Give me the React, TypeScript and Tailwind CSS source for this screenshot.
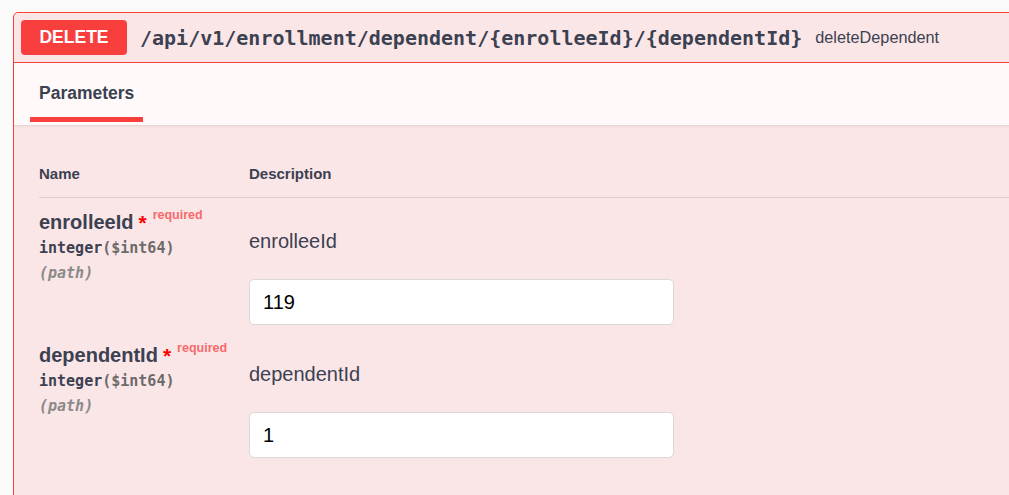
import React from "react";

interface Param {
  name: string;
  type: string;
  format: string;
  location: string;
  value: string;
}

const params: Param[] = [
  { name: "enrolleeId", type: "integer", format: "($int64)", location: "(path)", value: "119" },
  { name: "dependentId", type: "integer", format: "($int64)", location: "(path)", value: "1" },
];

const sans = "font-['Liberation_Sans',Arial,sans-serif]";
const mono = "font-['DejaVu_Sans_Mono',monospace]";

function ParamRow({ p }: { p: Param }) {
  return (
    <div className="flex pt-[12px] pb-[6px]">
      <div className="w-[210px] shrink-0">
        <div className="flex items-start h-[24px]">
          <span className={`${sans} text-[20px] leading-[24px] font-bold text-[#3b4151]`}>{p.name}</span>
          <span className={`${sans} ml-[5px] mt-[1px] text-[21px] leading-[24px] font-bold text-[#ff0000]`}>*</span>
          <span className={`${sans} ml-[6px] -mt-[3px] text-[12.5px] leading-[16px] font-bold text-[#f56a6c]`}>
            required
          </span>
        </div>
        <div className={`${mono} pt-[5px] text-[15px] leading-[18px] font-bold text-[#3b4151]`}>
          {p.type}
          <span className="text-[#6b6b6b]">{p.format}</span>
        </div>
        <div className={`${mono} pt-[7px] text-[15px] leading-[18px] italic font-bold text-[#8a8a8a]`}>
          {p.location}
        </div>
      </div>
      <div className="pt-[19px]">
        <p className={`${sans} text-[20px] leading-[24px] text-[#3b4151]`}>{p.name}</p>
        <div className="mt-[26px] w-[425px] h-[46px] bg-white border border-[#d9d9d9] rounded-[5px] flex items-center pl-[13px]">
          <span className={`${sans} text-[20px] text-black`}>{p.value}</span>
        </div>
      </div>
    </div>
  );
}

export default function App() {
  return (
    <div className="h-[495px] overflow-hidden bg-[#fafafa] pt-[12px] pl-[13px]">
      <div className="mr-[-20px] h-[600px] border border-[#f93e3e] rounded-tl-[5px] bg-[#fbe6e7]">
        {/* summary */}
        <div className="flex items-center h-[50px] border-b border-[#f93e3e] pl-[7px]">
          <div
            className={`${sans} w-[106px] h-[35px] rounded-[4px] bg-[#f93e3e] text-white text-[17.5px] font-bold flex items-center justify-center pb-[1px]`}
          >
            DELETE
          </div>
          <span className={`${mono} ml-[13px] text-[20px] font-bold text-[#3b4151]`}>
            /api/v1/enrollment/dependent/{"{enrolleeId}"}/{"{dependentId}"}
          </span>
          <span className={`${sans} ml-[13px] text-[16.25px] text-[#3b4151]`}>deleteDependent</span>
        </div>

        {/* tabs */}
        <div className="h-[62px] bg-[#fff9f9] shadow-[0_1px_2px_rgba(0,0,0,0.1)] flex items-end pl-[16px]">
          <div className="relative px-[9px] h-full flex items-center">
            <span className={`${sans} text-[17.5px] font-bold text-[#3b4151] -mt-[1px]`}>Parameters</span>
            <div className="absolute left-0 right-0 bottom-[3px] h-[5px] bg-[#f93e3e]" />
          </div>
        </div>

        {/* table */}
        <div className="pl-[25px] pt-[40px]">
          <div className="flex border-b border-[#dacfd1] pb-[14px]">
            <div className={`${sans} w-[210px] text-[15px] leading-[18px] font-bold text-[#3b4151]`}>Name</div>
            <div className={`${sans} text-[15px] leading-[18px] font-bold text-[#3b4151]`}>Description</div>
          </div>
          {params.map((p) => (
            <ParamRow key={p.name} p={p} />
          ))}
        </div>
      </div>
    </div>
  );
}
